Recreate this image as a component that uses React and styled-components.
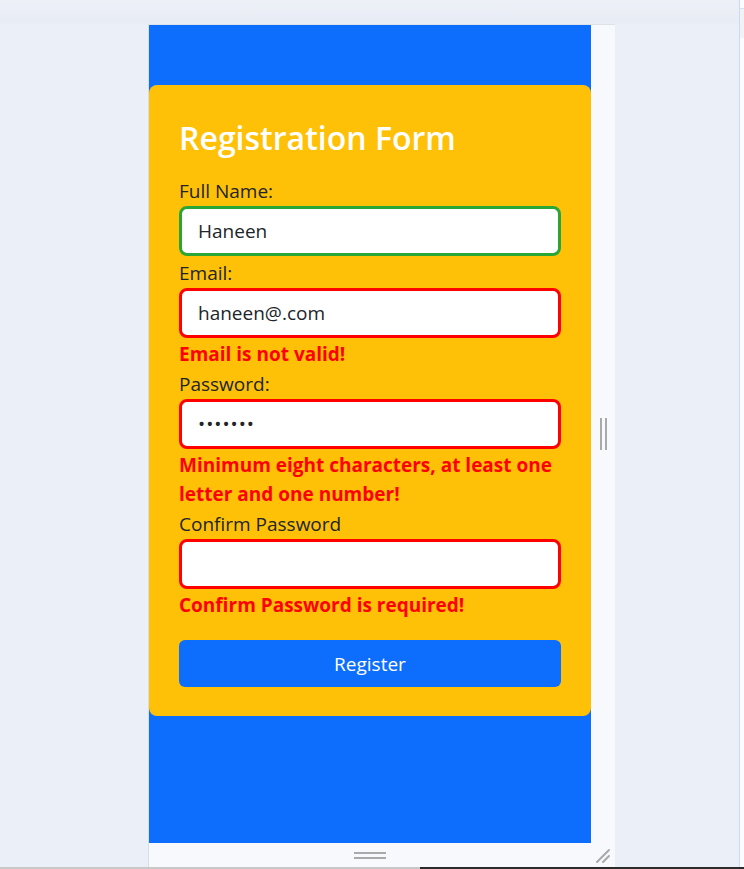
import styled, { createGlobalStyle } from "styled-components";

const GlobalStyle = createGlobalStyle`
  html, body {
    margin: 0;
    padding: 0;
  }
  body {
    background: #ebeff8;
    font-family: "Open Sans", "Noto Sans", "Liberation Sans", sans-serif;
    overflow: hidden;
  }
`;

const Page = styled.div`
  display: flex;
  flex-direction: column;
  height: 869px;
`;

const Workspace = styled.div`
  display: flex;
  height: 867px;
`;

const Stage = styled.div`
  flex: 1;
  padding: 24px 0 0 148px;
  background: linear-gradient(to bottom, #edf0f7 0, #e8ecf4 22px, #ebeff8 26px);
`;

const Frame = styled.div`
  display: grid;
  grid-template-columns: 442px 24px;
  grid-template-rows: 818px 25px;
  width: max-content;
  border-top: 1px solid #dde1e8;
  border-left: 1px solid #d9dde5;
`;

const Viewport = styled.div`
  background: #0d6efd;
  padding-top: 60px;
`;

const SideStrip = styled.div`
  background: #f8f9fd;
  display: flex;
  align-items: center;
  justify-content: center;
  gap: 3px;
`;

const BottomStrip = styled.div`
  background: #f8f9fd;
  display: flex;
  flex-direction: column;
  align-items: center;
  justify-content: center;
  gap: 3px;
`;

const Corner = styled.div`
  background: #f8f9fd;
  display: flex;
  align-items: center;
  justify-content: center;
`;

const Grip = styled.span`
  display: block;
  background: #a9a9a9;
  width: ${(p) => (p.$vertical ? "2px" : "32px")};
  height: ${(p) => (p.$vertical ? "32px" : "2px")};
`;

const RightEdge = styled.div`
  width: 4px;
  border-left: 1px solid #cbd9f3;
  background: #fbfcfe;
  display: flex;
  flex-direction: column;
`;

const EdgeTab = styled.div`
  margin-top: 8px;
  border-top: 1px solid #d6e1f5;
  height: 29px;
  background: #f1f2f4;
`;

const Taskline = styled.div`
  height: 2px;
  background: linear-gradient(to right, #c8c8c8 0, #c8c8c8 420px, #2b2b2b 420px);
`;

const Card = styled.form`
  background: #ffc107;
  border-radius: 8px;
  padding: 32px 30px 29px;
`;

const Title = styled.h1`
  margin: 0 0 18px;
  color: #ffffff;
  font-size: 32px;
  font-weight: 600;
  line-height: 41px;
`;

const Label = styled.label`
  display: block;
  color: #212529;
  font-size: 19px;
  line-height: 30px;
`;

const Input = styled.input`
  box-sizing: border-box;
  display: block;
  width: 100%;
  height: 50px;
  margin: 0 0 2px;
  padding: 0 16px;
  border: 3px solid ${(p) => (p.$valid ? "#2aa637" : "#ff0000")};
  border-radius: 8px;
  background: #ffffff;
  color: #212529;
  font-family: inherit;
  font-size: 19px;
  letter-spacing: ${(p) => (p.type === "password" ? "1px" : "normal")};
  outline: none;
`;

const Error = styled.div`
  color: #ff0000;
  font-size: 19px;
  font-weight: 700;
  line-height: 29px;
`;

const Button = styled.button`
  display: block;
  width: 100%;
  height: 47px;
  margin-top: 20px;
  border: none;
  border-radius: 6px;
  background: #0d6efd;
  color: #ffffff;
  font-family: inherit;
  font-size: 19px;
`;

function ResizeCorner() {
  return (
    <svg width="16" height="16" viewBox="0 0 16 16">
      <path d="M2 14 L14 2 M8 14 L14 8" stroke="#a9a9a9" strokeWidth="2" strokeLinecap="round" />
    </svg>
  );
}

export default function App() {
  return (
    <Page>
      <GlobalStyle />
      <Workspace>
        <Stage>
          <Frame>
            <Viewport>
              <Card onSubmit={(e) => e.preventDefault()}>
                <Title>Registration Form</Title>
                <Label>Full Name:</Label>
                <Input $valid type="text" defaultValue="Haneen" />
                <Label>Email:</Label>
                <Input type="text" defaultValue="haneen@.com" />
                <Error>Email is not valid!</Error>
                <Label>Password:</Label>
                <Input type="password" defaultValue="1234567" />
                <Error>Minimum eight characters, at least one letter and one number!</Error>
                <Label>Confirm Password</Label>
                <Input type="password" defaultValue="" />
                <Error>Confirm Password is required!</Error>
                <Button type="submit">Register</Button>
              </Card>
            </Viewport>
            <SideStrip>
              <Grip $vertical />
              <Grip $vertical />
            </SideStrip>
            <BottomStrip>
              <Grip />
              <Grip />
            </BottomStrip>
            <Corner>
              <ResizeCorner />
            </Corner>
          </Frame>
        </Stage>
        <RightEdge>
          <EdgeTab />
        </RightEdge>
      </Workspace>
      <Taskline />
    </Page>
  );
}
